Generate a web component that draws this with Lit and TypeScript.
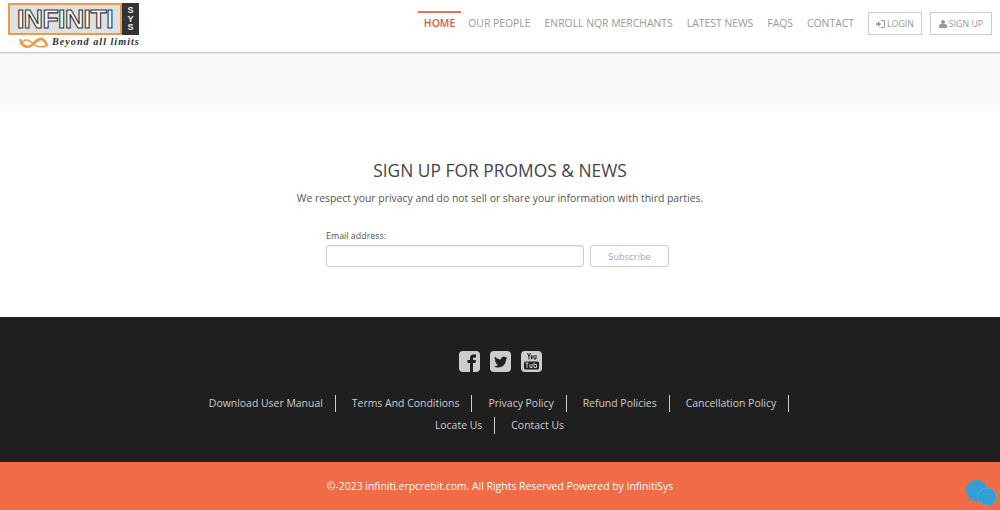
import { LitElement, html, css } from "lit";
import { customElement } from "lit/decorators.js";

const NAV = ["OUR PEOPLE", "ENROLL NQR MERCHANTS", "LATEST NEWS", "FAQS", "CONTACT"];
const LINKS = [
  ["Download User Manual", "Terms And Conditions", "Privacy Policy", "Refund Policies", "Cancellation Policy"],
  ["Locate Us", "Contact Us"],
];

@customElement("app-root")
export class AppRoot extends LitElement {
  static styles = css`
    :host { display: block; width: 1000px; height: 510px; overflow: hidden; position: relative; font-family: "Open Sans", sans-serif; background: #fff; }
    * { box-sizing: border-box; }
    header { height: 52px; display: flex; justify-content: space-between; background: #fff; box-shadow: 0 1px 2px rgba(0,0,0,.25); position: relative; padding: 0 8px; }
    .logo { width: 132px; padding-top: 3px; display: flex; flex-direction: column; }
    .logo-top { display: flex; height: 32px; }
    .logo-box { width: 114px; border: 2px solid #ee9a4d; background: #e0e0e0; display: flex; align-items: center; justify-content: center; font: 700 26.5px/1 "Liberation Sans", sans-serif; color: #fafafa; -webkit-text-stroke: 1.100px #333; letter-spacing: -.5px; }
    .logo-sys { width: 17px; background: #333; color: #eee; font: 700 9px/8.500px "Liberation Sans", sans-serif; display: flex; flex-direction: column; align-items: center; justify-content: center; }
    .logo-bottom { display: flex; align-items: center; height: 15px; padding-left: 11px; gap: 4px; }
    .logo-bottom span { font: italic 700 10.200px/1 "Liberation Serif", serif; letter-spacing: 1px; color: #333; white-space: nowrap; }
    .right { display: flex; align-items: flex-start; }
    nav { display: flex; padding-top: 11px; }
    nav a { font-size: 10.400px; line-height: 20px; height: 22px; color: #999; padding: 0 7px; border-top: 2px solid transparent; white-space: nowrap; }
    nav a.active { color: #e2583a; font-weight: 600; border-top-color: #e8745a; padding: 0 6px; }
    .btn { height: 23px; margin-top: 12px; border: 1px solid #ccc; font-size: 8.800px; color: #999; display: flex; align-items: center; justify-content: center; gap: 2px; }
    .btn.login { width: 54px; margin-left: 7px; }
    .btn.signup { width: 62px; margin-left: 8px; }
    .band { height: 59px; background: #fafafa; }
    .sub { height: 206px; display: flex; flex-direction: column; align-items: center; padding-top: 47px; }
    h2 { margin: 0; font-size: 17.400px; line-height: 24px; font-weight: 400; color: #444; }
    .sub p { margin: 8px 0 0; font-size: 10.400px; line-height: 16px; color: #555; }
    .form { width: 348px; margin-top: 24px; }
    .form label { display: block; font-size: 8.900px; line-height: 12px; color: #555; }
    .row { display: flex; gap: 6px; margin-top: 3px; }
    .input { width: 258px; height: 22px; border: 1px solid #ccc; border-radius: 3px; background: #fff; box-shadow: inset 0 1px 1px rgba(0,0,0,.08); }
    .sbtn { width: 79px; height: 22px; border: 1px solid #ccc; border-radius: 3px; font-size: 9.400px; color: #aaa; display: flex; align-items: center; justify-content: center; }
    .dark { height: 145px; background: #1f1f1f; display: flex; flex-direction: column; align-items: center; padding-top: 34px; }
    .social { display: flex; gap: 10px; height: 22px; }
    .social svg { display: block; }
    .links { margin-top: 19px; display: flex; flex-direction: column; align-items: center; }
    .lrow { display: flex; height: 22px; align-items: center; padding-right: 5px; }
    .lrow.first { padding-right: 18px; }
    .lrow a { font-size: 10.450px; color: #ccc; padding: 0 12px 0 16px; border-right: 1px solid #ccc; line-height: 17px; white-space: nowrap; }
    .lrow a:last-child { border-right: none; }
    .lrow.first a:last-child { border-right: 1px solid #ccc; }
    .copy { height: 48px; padding-bottom: 1px; background: #f06c46; color: #fff; font-size: 10.430px; display: flex; align-items: center; justify-content: center; }
    .chat { position: absolute; right: 3px; bottom: 4px; }
  `;

  render() {
    return html`
      <header>
        <div class="logo">
          <div class="logo-top">
            <div class="logo-box">INFINITI</div>
            <div class="logo-sys"><span>S</span><span>Y</span><span>S</span></div>
          </div>
          <div class="logo-bottom">
            <svg width="29" height="14" viewBox="0 0 29 14" fill="none" stroke="#ef9a47" stroke-linecap="round">
              <path stroke-width="2.600" d="M1.500 4C3 10 8 13 13 9C17 5 20 2 23 3C25 4 27 6 28 9" />
              <path stroke-width="1.600" d="M2 8C5 3 9 3 12 6C16 10 21 12 27 10" />
            </svg>
            <span>Beyond all limits</span>
          </div>
        </div>
        <div class="right">
          <nav>
            <a class="active">HOME</a>
            ${NAV.map((n) => html`<a>${n}</a>`)}
          </nav>
          <div class="btn login">
            <svg width="9" height="8" viewBox="0 0 9 8" fill="#999"><path d="M0 3h2V1l3 3-3 3V5H0zM5 0h3a1 1 0 0 1 1 1v6a1 1 0 0 1-1 1H5V7h3V1H5z"/></svg>
            LOGIN
          </div>
          <div class="btn signup">
            <svg width="8" height="8" viewBox="0 0 8 8" fill="#999"><circle cx="4" cy="2" r="2"/><path d="M0 8V6a2 2 0 0 1 2-2h4a2 2 0 0 1 2 2v2z"/></svg>
            SIGN UP
          </div>
        </div>
      </header>
      <div class="band"></div>
      <section class="sub">
        <h2>SIGN UP FOR PROMOS &amp; NEWS</h2>
        <p>We respect your privacy and do not sell or share your information with third parties.</p>
        <div class="form">
          <label>Email address:</label>
          <div class="row"><div class="input"></div><div class="sbtn">Subscribe</div></div>
        </div>
      </section>
      <section class="dark">
        <div class="social">
          <svg width="21" height="21" viewBox="0 0 21 21"><rect width="21" height="21" rx="4" fill="#ccc"/><path d="M11 21V12H8.500V9H11V7C11 4.500 12.500 3.500 14.500 3.500H17V6.500H15C14.300 6.500 14 6.900 14 7.500V9H17L16.500 12H14V21Z" fill="#1f1f1f"/></svg>
          <svg width="21" height="21" viewBox="0 0 21 21"><rect width="21" height="21" rx="4" fill="#ccc"/><path d="M4 15.500C9 18 16 15.500 16 8.500L17.500 7L16 7.200L17.200 5.800L15.500 6.300C14 4.800 11 5.800 11 8.500C8.500 8.500 6.500 7.300 5 5.500C4.300 7 4.700 8.500 6 9.500L4.800 9.200C4.900 10.500 5.800 11.500 7 11.900L5.800 12C6.200 13 7.200 13.700 8.200 13.800C7 14.900 5.500 15.500 4 15.500Z" fill="#1f1f1f"/></svg>
          <svg width="21" height="21" viewBox="0 0 21 21"><rect width="21" height="21" rx="4" fill="#ccc"/><rect x="3" y="10.500" width="15" height="8" rx="1.500" fill="#1f1f1f"/><path d="M4.500 12h3M6 12v5M9 13v3.500h2V13M13 11.500v5h2.500v-3H13" stroke="#ccc" stroke-width="1" fill="none"/><path d="M6.500 2l1.500 3.500L9.500 2M8 5.500V8.500M11 4.500v3.500h-.6V4.500zM13 4v4h2V4" stroke="#1f1f1f" stroke-width="1" fill="none"/></svg>
        </div>
        <div class="links">
          <div class="lrow first">${LINKS[0].map((l) => html`<a>${l}</a>`)}</div>
          <div class="lrow">${LINKS[1].map((l) => html`<a>${l}</a>`)}</div>
        </div>
      </section>
      <footer class="copy">©-2023 infiniti.erpcrebit.com. All Rights Reserved Powered by InfinitiSys</footer>
      <svg class="chat" width="31" height="26" viewBox="0 0 31 26">
        <path d="M10.500 0C4.500 0 0 4.500 0 10C0 13 1.500 15.500 3 17L2.500 21L6.500 19.500C8 20.500 9 21 10.500 21C16.500 21 21 16 21 10C21 4.500 16.500 0 10.500 0Z" fill="#2f9fd8"/>
        <ellipse cx="21" cy="16.500" rx="9.500" ry="8.500" fill="#2f9fd8" stroke="#5fb4dc" stroke-width=".6"/>
        <path d="M25 23L28 26L22 24.500Z" fill="#2f9fd8"/>
        <circle cx="7" cy="6.500" r="1.100" fill="#6f8fa8"/><circle cx="14" cy="6.500" r="1.100" fill="#6f8fa8"/>
        <circle cx="18" cy="14" r="1" fill="#6f8fa8"/><circle cx="24" cy="14" r="1" fill="#6f8fa8"/>
      </svg>
    `;
  }
}
